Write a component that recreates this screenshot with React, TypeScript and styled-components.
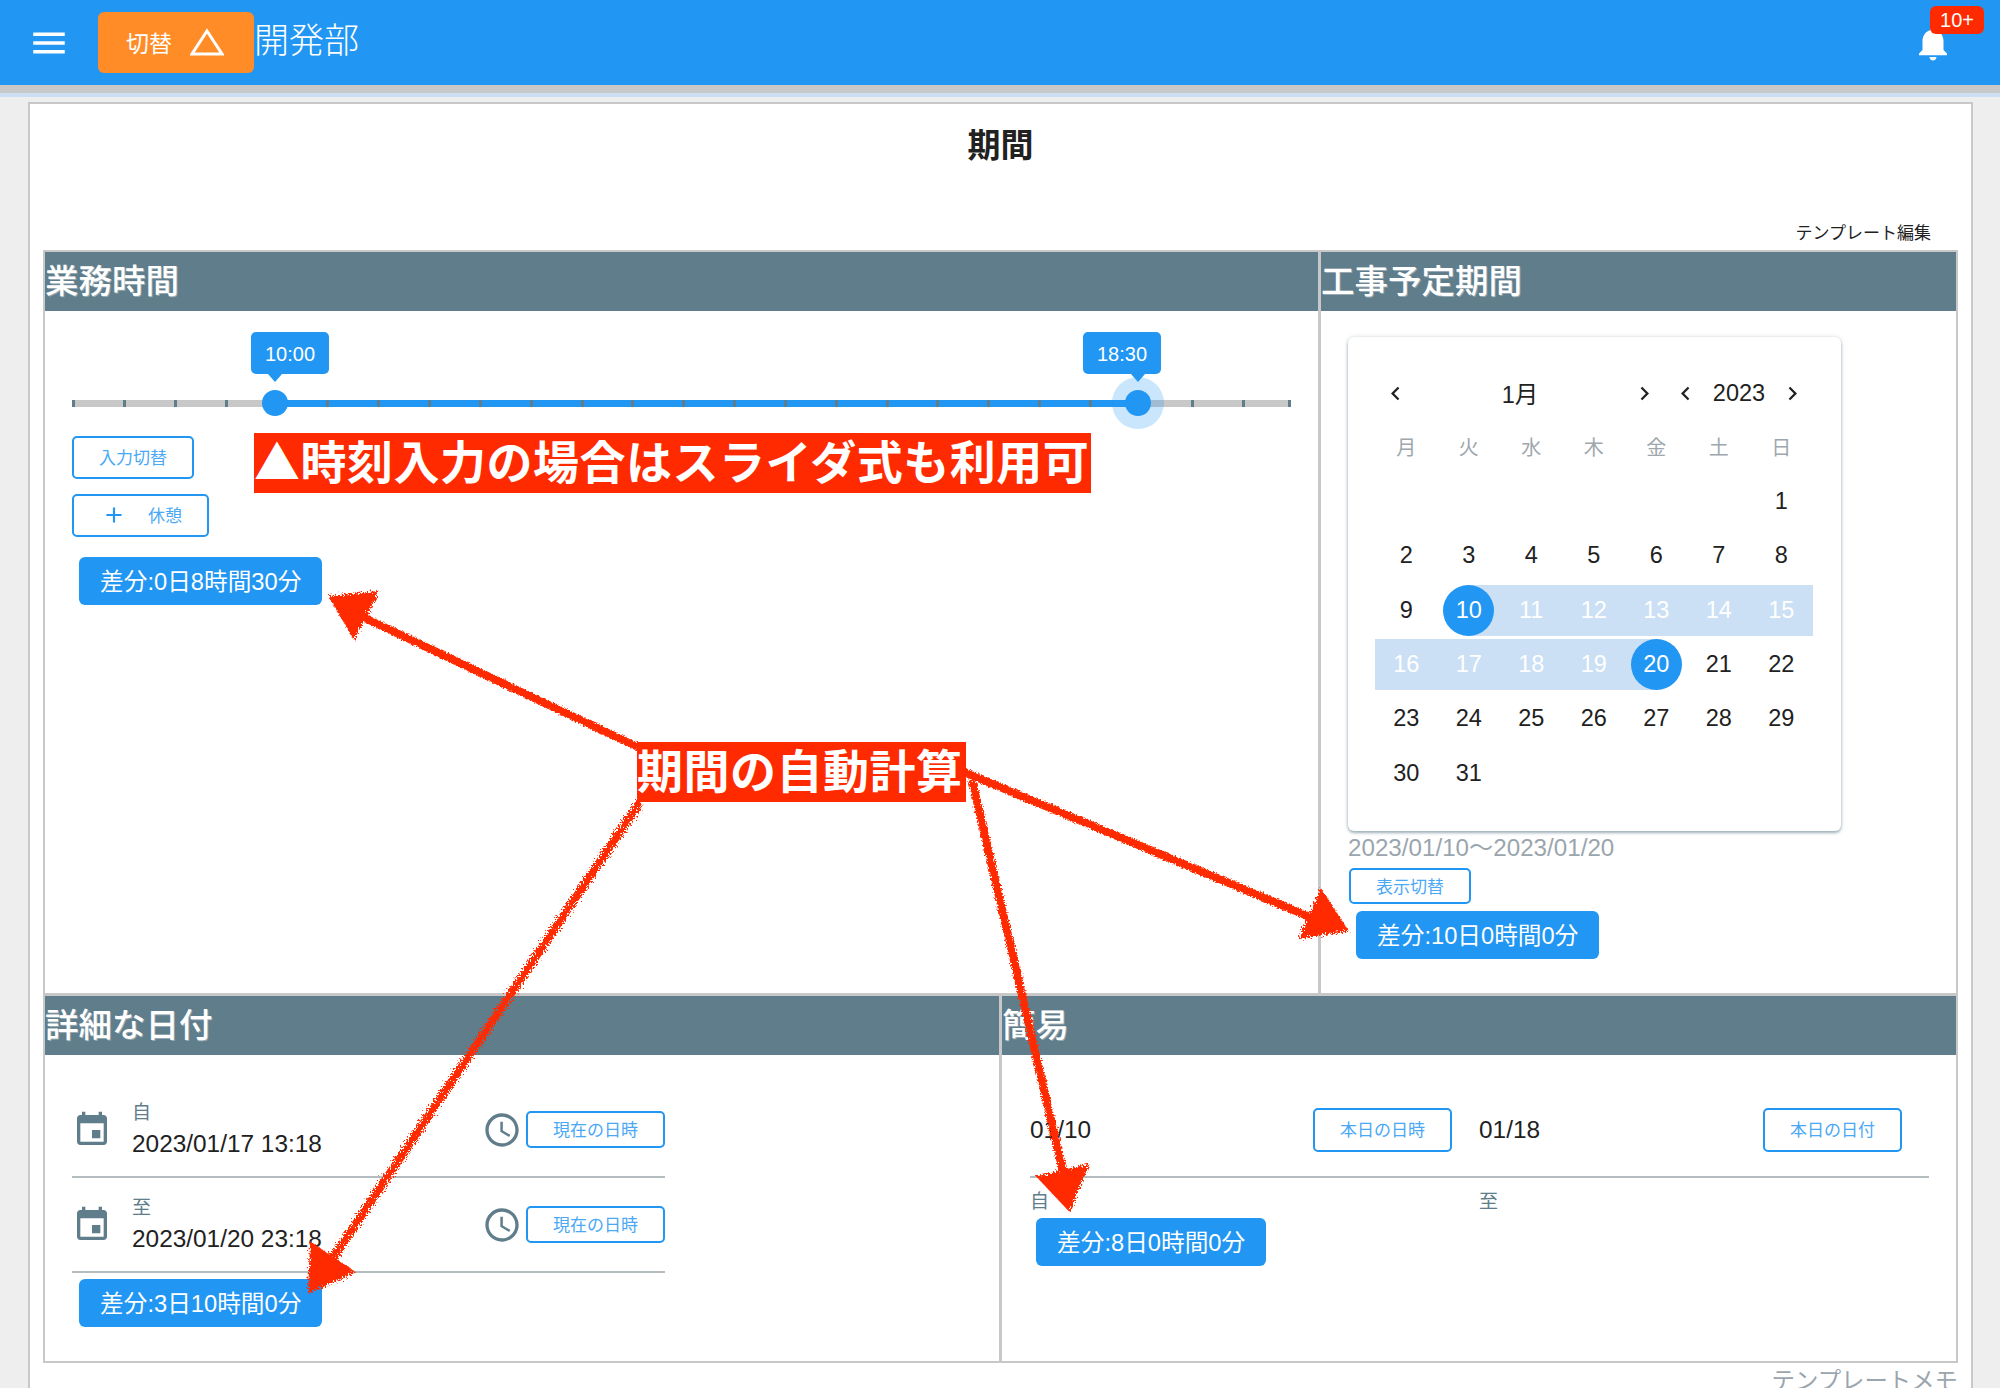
import React from 'react'
import styled, { createGlobalStyle } from 'styled-components'

const BLUE = '#2196f3'
const SLATE = '#607d8b'
const RED = '#ff2a00'
const LINE = '#c8c8c8'
const TEXT = '#212121'

const GlobalStyle = createGlobalStyle`
  html, body {
    margin: 0;
    width: 2000px;
    height: 1388px;
    overflow: hidden;
    background: #eeeeee;
    color: ${TEXT};
    font-family: 'Liberation Sans', 'Noto Sans CJK JP', sans-serif;
  }

  * {
    box-sizing: border-box;
  }
`

const Page = styled.div`
  position: relative;
  width: 2000px;
  height: 1388px;
  overflow: hidden;
`

const AppBar = styled.header`
  display: flex;
  align-items: center;
  height: 85px;
  padding: 0 46px 0 28px;
  background: ${BLUE};
  box-shadow: 0 8px 0 #c8c8c8, 0 12px 0 #cde0f3;
`

const Glyph = styled.svg<{ $size: number; $color?: string }>`
  display: block;
  flex: none;
  width: ${(props) => props.$size}px;
  height: ${(props) => props.$size}px;
  fill: ${(props) => props.$color || SLATE};
`

const SwitchButton = styled.div`
  display: flex;
  align-items: center;
  gap: 18px;
  width: 156px;
  height: 61px;
  margin-left: 28px;
  padding: 0 0 2px 28px;
  border-radius: 6px;
  background: #ff8c26;
  color: #ffffff;
  font-size: 23px;
`

const Department = styled.div`
  margin: -4px 0 0;
  color: #ffffff;
  font-size: 35px;
  font-weight: 300;
  line-height: 1;
`

const BellBox = styled.div`
  position: relative;
  margin-left: auto;
`

const Badge = styled.div`
  position: absolute;
  top: -16px;
  left: 18px;
  width: 54px;
  height: 28px;
  border-radius: 6px;
  background: ${RED};
  color: #ffffff;
  font-size: 20px;
  line-height: 28px;
  text-align: center;
`

const Card = styled.main`
  width: 1945px;
  margin: 17px 0 0 28px;
  padding: 0 13px;
  border: 2px solid ${LINE};
  background: #ffffff;
`

const Title = styled.h1`
  margin: 0;
  padding-top: 21px;
  font-size: 33px;
  font-weight: 700;
  line-height: 41px;
  text-align: center;
`

const TemplateLink = styled.div`
  margin-top: 58px;
  padding-right: 27px;
  font-size: 17px;
  line-height: 20px;
  text-align: right;
`

const Sheet = styled.div`
  margin-top: 6px;
  border: 2px solid ${LINE};
`

const SheetRow = styled.div<{ $height: number; $divided?: boolean }>`
  display: flex;
  height: ${(props) => props.$height}px;
  border-bottom: ${(props) => (props.$divided ? `3px solid ${LINE}` : 'none')};
`

const Panel = styled.section<{ $width: number; $divided?: boolean }>`
  flex: none;
  width: ${(props) => props.$width}px;
  border-right: ${(props) => (props.$divided ? `3px solid ${LINE}` : 'none')};
`

const PanelHeader = styled.h2`
  height: 59px;
  margin: 0;
  background: ${SLATE};
  color: #ffffff;
  font-size: 33.5px;
  font-weight: 500;
  line-height: 60px;
  text-shadow: 1px 1px 0 rgba(255, 255, 255, 0.35);
`

const PanelBody = styled.div<{ $left: number; $top: number }>`
  padding: ${(props) => props.$top}px 0 0 ${(props) => props.$left}px;
`

const SliderRoot = styled.div`
  position: relative;
  width: 1219px;
  height: 7px;
  border-radius: 4px;
  background: ${LINE};
`

const SliderRange = styled.div`
  position: absolute;
  top: 0;
  bottom: 0;
  background: ${BLUE};
`

const SliderTick = styled.div`
  position: absolute;
  top: 0;
  width: 3px;
  height: 7px;
  margin-left: -1.5px;
  background: ${SLATE};
`

const SliderThumb = styled.div<{ $active?: boolean }>`
  position: absolute;
  top: -10px;
  width: 26px;
  height: 26px;
  margin-left: -13px;
  border-radius: 50%;
  background: ${BLUE};
  box-shadow: ${(props) => (props.$active ? '0 0 0 13px rgba(33, 150, 243, 0.24)' : 'none')};
`

const SliderBubble = styled.div<{ $tip: number }>`
  position: absolute;
  top: -68px;
  width: 78px;
  height: 42px;
  border-radius: 5px;
  background: ${BLUE};
  color: #ffffff;
  font-size: 20px;
  line-height: 44px;
  text-align: center;

  &::after {
    content: '';
    position: absolute;
    top: 42px;
    left: ${(props) => props.$tip - 7}px;
    border-top: 8px solid ${BLUE};
    border-right: 7px solid transparent;
    border-left: 7px solid transparent;
  }
`

const OutlineButton = styled.div<{ $width: number; $height: number; $top?: number; $left?: number }>`
  display: flex;
  flex: none;
  align-items: center;
  justify-content: center;
  width: ${(props) => props.$width}px;
  height: ${(props) => props.$height}px;
  margin: ${(props) => props.$top || 0}px 0 0 ${(props) => props.$left || 0}px;
  padding-bottom: 2px;
  border: 2px solid ${BLUE};
  border-radius: 5px;
  background: #ffffff;
  color: #4aa8f5;
  font-size: 17px;
`

const BreakButton = styled(OutlineButton)`
  justify-content: flex-start;
  gap: 21px;
  padding-left: 27px;
`

const Chip = styled.div<{ $top: number; $left: number }>`
  display: inline-flex;
  align-items: center;
  height: 48px;
  margin: ${(props) => props.$top}px 0 0 ${(props) => props.$left}px;
  padding: 0 21px 2px;
  border-radius: 6px;
  background: ${BLUE};
  color: #ffffff;
  font-size: 23.7px;
  white-space: nowrap;
`

const CalendarCard = styled.div`
  width: 493px;
  height: 494px;
  padding: 41px 0 0 27px;
  border-radius: 6px;
  background: #ffffff;
  box-shadow: 0 2px 3px rgba(96, 125, 139, 0.55), 0 0 4px rgba(96, 125, 139, 0.25);
`

const CalendarHeader = styled.div`
  display: flex;
  gap: 14px;
  height: 30px;
  padding-left: 7px;
`

const CalendarNav = styled.div<{ $width: number }>`
  display: flex;
  align-items: center;
  justify-content: space-between;
  width: ${(props) => props.$width}px;
  font-size: 23.5px;
`

const CalendarGrid = styled.div`
  display: grid;
  grid-template-columns: repeat(7, 62.5px);
  grid-auto-rows: 54.33px;
  margin-top: 12px;
`

const Weekday = styled.div`
  display: flex;
  align-items: center;
  justify-content: center;
  padding-bottom: 2px;
  color: #9ea7ad;
  font-size: 20px;
`

const bandBackground = (edge?: 'start' | 'end') => {
  if (edge === 'start') return 'linear-gradient(to right, transparent 50%, #cbe0f4 50%)'
  if (edge === 'end') return 'linear-gradient(to left, transparent 50%, #cbe0f4 50%)'
  return '#cbe0f4'
}

const DayCell = styled.div`
  display: flex;
  align-items: center;
  justify-content: center;
  font-size: 23.5px;
`

const DayBand = styled.div<{ $edge?: 'start' | 'end' }>`
  display: flex;
  align-items: center;
  justify-content: center;
  width: 100%;
  height: 51px;
  background: ${(props) => bandBackground(props.$edge)};
  color: #ffffff;
`

const DayMark = styled.div`
  flex: none;
  width: 51px;
  height: 51px;
  border-radius: 50%;
  background: ${BLUE};
  color: #ffffff;
  line-height: 51px;
  text-align: center;
`

const RangeText = styled.div`
  margin-top: 3px;
  color: #9aa5ad;
  font-size: 24.2px;
  line-height: 28px;
`

const DetailRow = styled.div`
  display: flex;
  align-items: center;
  width: 593px;
  height: 95px;
  border-bottom: 2px solid #b5bcc0;
`

const DateBlock = styled.div`
  flex: 1;
  margin-left: 20px;
`

const FieldLabel = styled.div`
  color: ${SLATE};
  font-size: 19px;
  line-height: 24px;
`

const DateValue = styled.div`
  margin-top: 4px;
  font-size: 24.4px;
  line-height: 30px;
`

const ClockBox = styled.div`
  margin-right: 4px;
`

const SimpleGrid = styled.div`
  display: grid;
  grid-template-columns: 449px 450px;
  width: 899px;
`

const SimpleCell = styled.div`
  display: flex;
  align-items: center;
  justify-content: space-between;
  height: 95px;
  padding-right: 27px;
  border-bottom: 2px solid #b5bcc0;
  font-size: 24.4px;
`

const SimpleLabel = styled(FieldLabel)`
  margin-top: 12px;
`

const Memo = styled.div`
  margin-top: 5px;
  color: #9aa5ad;
  font-size: 23.4px;
  line-height: 26px;
  text-align: right;
`

const Annotations = styled.div`
  position: absolute;
  top: 0;
  left: 0;
  width: 2000px;
  height: 1388px;
  pointer-events: none;
`

const Scribble = styled.svg`
  display: block;
`

const Callout = styled.div<{ $left: number; $top: number; $width: number }>`
  position: absolute;
  top: ${(props) => props.$top}px;
  left: ${(props) => props.$left}px;
  width: ${(props) => props.$width}px;
  height: 60px;
  background: ${RED};
  color: #ffffff;
  font-family: 'Noto Sans CJK JP', sans-serif;
  font-size: 46px;
  font-weight: 700;
  letter-spacing: 0.5px;
  line-height: 53px;
  white-space: nowrap;
`

const ICONS = {
  menu: 'M3 18h18v-2H3v2zm0-5h18v-2H3v2zm0-7v2h18V6H3z',
  bell: 'M12 22c1.1 0 2-.9 2-2h-4c0 1.1.89 2 2 2zm6-6v-5c0-3.07-1.64-5.64-4.5-6.32V4c0-.83-.67-1.5-1.5-1.5s-1.5.67-1.5 1.5v.68C7.63 5.36 6 7.92 6 11v5l-2 2v1h16v-1l-2-2z',
  event: 'M17 12h-5v5h5v-5zM16 1v2H8V1H6v2H5c-1.11 0-1.99.9-1.99 2L3 19c0 1.1.89 2 2 2h14c1.1 0 2-.9 2-2V5c0-1.1-.9-2-2-2h-1V1h-2zm3 18H5V8h14v11z',
  clock: 'M11.99 2C6.47 2 2 6.48 2 12s4.47 10 9.99 10C17.52 22 22 17.52 22 12S17.52 2 11.99 2zM12 20c-4.42 0-8-3.58-8-8s3.58-8 8-8 8 3.58 8 8-3.58 8-8 8zm.5-13H11v6l5.25 3.15.75-1.23-4.5-2.67z',
  left: 'M15.41 7.41 14 6l-6 6 6 6 1.41-1.41L10.83 12z',
  right: 'M10 6 8.59 7.41 13.17 12l-4.58 4.59L10 18l6-6z',
  plus: 'M19 13h-6v6h-2v-6H5v-2h6V5h2v6h6v2z',
}

const Icon: React.FC<{ name: keyof typeof ICONS; size: number; color?: string }> = ({ name, size, color }) => (
  <Glyph $size={size} $color={color} viewBox="0 0 24 24">
    <path d={ICONS[name]} />
  </Glyph>
)

const TICKS = Array.from({ length: 25 }, (_, i) => Math.min(1.5 + i * 50.85, 1217.5))
const WEEKDAYS = ['月', '火', '水', '木', '金', '土', '日']
const BLANKS = [0, 1, 2, 3, 4, 5]
const DAYS = Array.from({ length: 31 }, (_, i) => i + 1)

const Slider = () => (
  <SliderRoot>
    <SliderRange style={{ left: 203, right: 153 }} />
    {TICKS.map((tick) => (
      <SliderTick key={tick} style={{ left: tick }} />
    ))}
    <SliderThumb style={{ left: 203 }} />
    <SliderThumb style={{ left: 1066 }} $active />
    <SliderBubble $tip={24} style={{ left: 179 }}>
      10:00
    </SliderBubble>
    <SliderBubble $tip={55} style={{ left: 1011 }}>
      18:30
    </SliderBubble>
  </SliderRoot>
)

const Day: React.FC<{ day: number }> = ({ day }) => {
  if (day === 10) {
    return (
      <DayCell>
        <DayBand $edge="start">
          <DayMark>{day}</DayMark>
        </DayBand>
      </DayCell>
    )
  }
  if (day === 20) {
    return (
      <DayCell>
        <DayBand $edge="end">
          <DayMark>{day}</DayMark>
        </DayBand>
      </DayCell>
    )
  }
  if (day > 10 && day < 20) {
    return (
      <DayCell>
        <DayBand>{day}</DayBand>
      </DayCell>
    )
  }
  return <DayCell>{day}</DayCell>
}

const Calendar = () => (
  <CalendarCard>
    <CalendarHeader>
      <CalendarNav $width={276}>
        <Icon name="left" size={27} color={TEXT} />
        1月
        <Icon name="right" size={27} color={TEXT} />
      </CalendarNav>
      <CalendarNav $width={134}>
        <Icon name="left" size={27} color={TEXT} />
        2023
        <Icon name="right" size={27} color={TEXT} />
      </CalendarNav>
    </CalendarHeader>
    <CalendarGrid>
      {WEEKDAYS.map((name) => (
        <Weekday key={name}>{name}</Weekday>
      ))}
      {BLANKS.map((blank) => (
        <DayCell key={blank} />
      ))}
      {DAYS.map((day) => (
        <Day key={day} day={day} />
      ))}
    </CalendarGrid>
  </CalendarCard>
)

const DetailDate: React.FC<{ label: string; value: string }> = ({ label, value }) => (
  <DetailRow>
    <Icon name="event" size={40} />
    <DateBlock>
      <FieldLabel>{label}</FieldLabel>
      <DateValue>{value}</DateValue>
    </DateBlock>
    <ClockBox>
      <Icon name="clock" size={40} />
    </ClockBox>
    <OutlineButton $width={139} $height={37}>
      現在の日時
    </OutlineButton>
  </DetailRow>
)

const ARROWS = [
  { from: [640, 748], to: [352, 612], head: '330,597 378,592 354,638' },
  { from: [640, 802], to: [330, 1262], head: '311,1243 354,1272 309,1292' },
  { from: [972, 780], to: [1064, 1176], head: '1088,1165 1038,1177 1069,1210' },
  { from: [964, 772], to: [1322, 922], head: '1321,890 1347,930 1300,938' },
]

const Arrows = () => (
  <Scribble width="2000" height="1388" viewBox="0 0 2000 1388">
    <defs>
      <filter id="chalk" x="-5%" y="-5%" width="110%" height="110%">
        <feTurbulence type="fractalNoise" baseFrequency="0.6" numOctaves="2" seed="4" />
        <feDisplacementMap in="SourceGraphic" scale="9" />
      </filter>
    </defs>
    <g filter="url(#chalk)" fill={RED} stroke={RED}>
      {ARROWS.map((arrow) => (
        <g key={arrow.head}>
          <line x1={arrow.from[0]} y1={arrow.from[1]} x2={arrow.to[0]} y2={arrow.to[1]} strokeWidth="8" />
          <polygon points={arrow.head} strokeWidth="2" />
        </g>
      ))}
    </g>
  </Scribble>
)

export default function App() {
  return (
    <Page>
      <GlobalStyle />
      <AppBar>
        <Icon name="menu" size={42} color="#ffffff" />
        <SwitchButton>
          切替
          <svg width="34" height="28" viewBox="0 0 34 28">
            <polygon points="17,3 32,26 2,26" fill="none" stroke="#ffffff" strokeWidth="3" />
          </svg>
        </SwitchButton>
        <Department>開発部</Department>
        <BellBox>
          <Icon name="bell" size={42} color="#ffffff" />
          <Badge>10+</Badge>
        </BellBox>
      </AppBar>

      <Card>
        <Title>期間</Title>
        <TemplateLink>テンプレート編集</TemplateLink>
        <Sheet>
          <SheetRow $height={744} $divided>
            <Panel $width={1276} $divided>
              <PanelHeader>業務時間</PanelHeader>
              <PanelBody $left={27} $top={89}>
                <Slider />
                <OutlineButton $width={122} $height={43} $top={29}>
                  入力切替
                </OutlineButton>
                <BreakButton $width={137} $height={43} $top={15}>
                  <Icon name="plus" size={26} color={BLUE} />
                  休憩
                </BreakButton>
                <Chip $top={20} $left={7}>
                  差分:0日8時間30分
                </Chip>
              </PanelBody>
            </Panel>
            <Panel $width={635}>
              <PanelHeader>工事予定期間</PanelHeader>
              <PanelBody $left={27} $top={26}>
                <Calendar />
                <RangeText>2023/01/10〜2023/01/20</RangeText>
                <OutlineButton $width={122} $height={36} $top={6} $left={1}>
                  表示切替
                </OutlineButton>
                <Chip $top={7} $left={8}>
                  差分:10日0時間0分
                </Chip>
              </PanelBody>
            </Panel>
          </SheetRow>
          <SheetRow $height={365}>
            <Panel $width={957} $divided>
              <PanelHeader>詳細な日付</PanelHeader>
              <PanelBody $left={27} $top={28}>
                <DetailDate label="自" value="2023/01/17 13:18" />
                <DetailDate label="至" value="2023/01/20 23:18" />
                <Chip $top={6} $left={7}>
                  差分:3日10時間0分
                </Chip>
              </PanelBody>
            </Panel>
            <Panel $width={954}>
              <PanelHeader>簡易</PanelHeader>
              <PanelBody $left={28} $top={28}>
                <SimpleGrid>
                  <SimpleCell>
                    01/10
                    <OutlineButton $width={139} $height={44}>
                      本日の日時
                    </OutlineButton>
                  </SimpleCell>
                  <SimpleCell>
                    01/18
                    <OutlineButton $width={139} $height={44}>
                      本日の日付
                    </OutlineButton>
                  </SimpleCell>
                  <SimpleLabel>自</SimpleLabel>
                  <SimpleLabel>至</SimpleLabel>
                </SimpleGrid>
                <Chip $top={4} $left={6}>
                  差分:8日0時間0分
                </Chip>
              </PanelBody>
            </Panel>
          </SheetRow>
        </Sheet>
        <Memo>テンプレートメモ</Memo>
      </Card>

      <Annotations>
        <Arrows />
        <Callout $left={254} $top={433} $width={837}>
          ▲時刻入力の場合はスライダ式も利用可
        </Callout>
        <Callout $left={637} $top={742} $width={329}>
          期間の自動計算
        </Callout>
      </Annotations>
    </Page>
  )
}
